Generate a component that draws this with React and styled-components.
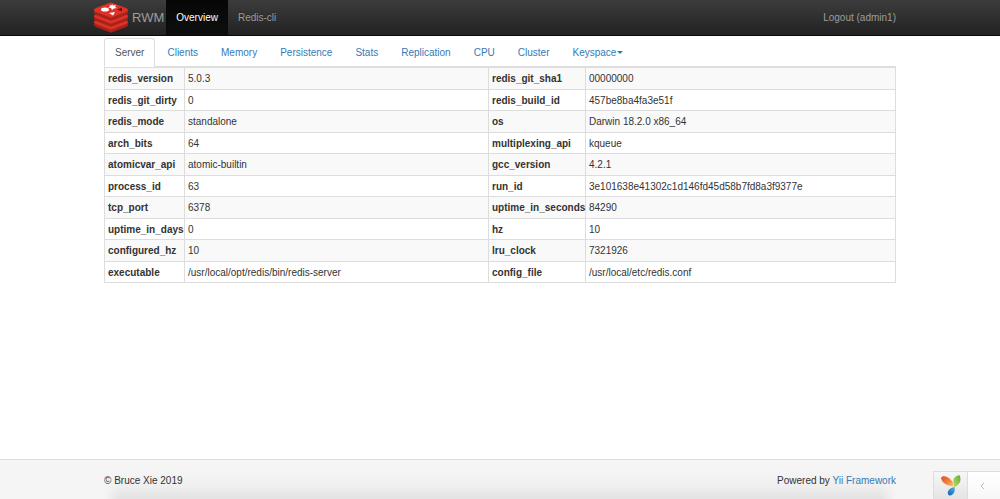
import React from 'react';
import styled, { createGlobalStyle, css } from 'styled-components';

const GlobalStyle = createGlobalStyle`
  *, *::before, *::after { box-sizing: border-box; }
  body {
    margin: 0;
    background: #fff;
    color: #333;
    font: 10px/14px "Helvetica Neue", Helvetica, "Liberation Sans", Arial, sans-serif;
  }
  a { color: #337ab7; text-decoration: none; }
`;

const Page = styled.div`
  display: flex;
  flex-direction: column;
  min-height: 100vh;
`;

const Container = styled.div`
  width: 100%;
  max-width: 792px;
  margin: 0 auto;
`;

const Navbar = styled.header`
  background: linear-gradient(to bottom, #3c3c3c 0%, #222 100%);
  border-bottom: 1px solid #080808;
`;

const NavRow = styled(Container)`
  display: flex;
  align-items: stretch;
  height: 35px;
`;

const Brand = styled.a`
  && { color: #9d9d9d; }
  display: flex;
  align-items: center;
  gap: 4px;
  margin-left: -10px;
  padding-right: 2px;
  font-size: 13px;
`;

const Logo = styled.svg`
  display: block;
  width: 34px;
  height: 31px;
`;

const NavLinks = styled.nav`
  display: flex;
  flex: 1;
`;

const NavLink = styled.a`
  && { color: ${(p) => (p.$active ? '#fff' : '#9d9d9d')}; }
  display: flex;
  align-items: center;
  padding: 0 10px;
  text-shadow: 0 -1px 0 rgba(0, 0, 0, 0.25);
  ${(p) => p.$active && css`
    background: linear-gradient(to bottom, #080808 0%, #0f0f0f 100%);
    box-shadow: inset 0 3px 9px rgba(0, 0, 0, 0.25);
  `}
`;

const LogoutButton = styled.button`
  padding: 0;
  border: 0;
  background: none;
  color: #9d9d9d;
  font: inherit;
  cursor: pointer;
`;

const Main = styled.main`
  flex: 1;
  padding-top: 2px;
`;

const Tabs = styled.nav`
  display: flex;
  gap: 1px;
  border-bottom: 1px solid #ddd;
`;

const Tab = styled.a`
  display: flex;
  align-items: center;
  height: 29px;
  margin-bottom: -1px;
  padding: 0 10px;
  border: 1px solid transparent;
  border-radius: 3px 3px 0 0;
  ${(p) => p.$active && css`
    && { color: #555; }
    background: #fff;
    border-color: #ddd #ddd #fff;
  `}
`;

const Caret = styled.span`
  margin-left: 1px;
  border-top: 3px solid;
  border-left: 3px solid transparent;
  border-right: 3px solid transparent;
`;

const InfoTable = styled.table`
  width: 100%;
  height: 216px;
  border: 1px solid #ddd;
  border-collapse: collapse;
  table-layout: fixed;
`;

const Col = styled.col`
  width: ${(p) => p.$width};
`;

const InfoRow = styled.tr`
  &:nth-child(odd) { background: #f9f9f9; }
`;

const Name = styled.th`
  padding: 4px 3px 2px;
  border: 1px solid #ddd;
  text-align: left;
  white-space: nowrap;
`;

const Value = styled.td`
  padding: 4px 3px 2px;
  border: 1px solid #ddd;
`;

const Footer = styled.footer`
  height: 40px;
  border-top: 1px solid #ddd;
  background: #f5f5f5;
`;

const FooterRow = styled(Container)`
  display: flex;
  align-items: center;
  justify-content: space-between;
  height: 39px;
  padding-top: 3px;
  background:
    linear-gradient(to right, #f5f5f5, rgba(245, 245, 245, 0) 16px, rgba(245, 245, 245, 0) calc(100% - 16px), #f5f5f5),
    linear-gradient(to bottom, #f5f5f5 30%, #eee 70%, #e2e2e2 100%);
`;

const DebugBar = styled.aside`
  position: fixed;
  right: 0;
  bottom: 0;
  display: flex;
  height: 28px;
  border: 1px solid #ddd;
  border-width: 1px 0 0 1px;
`;

const DebugLogo = styled.a`
  display: flex;
  align-items: center;
  justify-content: center;
  width: 33px;
  background: linear-gradient(to bottom, #f7f7f7, #e4e4e4);
`;

const DebugToggle = styled.button`
  display: flex;
  align-items: center;
  justify-content: center;
  width: 33px;
  padding: 0 3px 0 0;
  border: 0;
  border-left: 1px solid #ddd;
  background: linear-gradient(to bottom, #fff, #f7f7f7);
  color: #bbb;
  cursor: pointer;
`;

const layers = [12, 6, 0];

function RedisLogo() {
  return (
    <Logo viewBox="0 0 34 31" aria-hidden="true">
      {layers.map((y) => (
        <g key={y} transform={`translate(0 ${y})`}>
          <path d="M0 8v3c0 1 1 1 2 2l13 5q2 1 4 0l13-5c1-1 2-1 2-2V8z" fill="#a8221a" />
          <path d="M0 8c0-1 1-1 2-2L15 1q2-1 4 0l13 5c1 1 2 1 2 2s-1 1-2 2l-13 5q-2 1-4 0L2 10C1 9 0 9 0 8z" fill="#dc3228" />
        </g>
      ))}
      <path d="m18 2 1 1.500 3-.5-1 2 2 1-3 .5L18 8l-1-2-3-.5 2-1-.5-1.500 2 .5z" fill="#fff" />
      <ellipse cx="11" cy="7.500" rx="4" ry="2" fill="#fff" />
      <path d="m15 11 6-1-2 3.500z" fill="#fff" />
      <path d="m23 7.500 5-2v4z" fill="#7a0c00" />
    </Logo>
  );
}

function YiiLogo() {
  return (
    <svg width="20" height="21" viewBox="0 0 20 21" role="img" aria-label="Yii">
      <defs>
        <linearGradient id="leafOrange" x1="0" y1="0" x2="1" y2="1">
          <stop offset="0" stopColor="#e5452f" />
          <stop offset="0.6" stopColor="#f08a3c" />
          <stop offset="1" stopColor="#f7cf73" />
        </linearGradient>
        <linearGradient id="leafGreen" x1="1" y1="0" x2="0" y2="1">
          <stop offset="0" stopColor="#5fae35" />
          <stop offset="1" stopColor="#c3de60" />
        </linearGradient>
        <linearGradient id="leafBlue" x1="1" y1="0" x2="0" y2="1">
          <stop offset="0" stopColor="#4db3e6" />
          <stop offset="1" stopColor="#1560ae" />
        </linearGradient>
      </defs>
      <path d="M0 3C1 0 7 1 10 5c2 2 2.500 4 2.500 6.500C8 11 1 9 0 3z" fill="url(#leafOrange)" />
      <path d="M18.500 0C14 1 11.500 4 12.500 8c.5 2 .5 3 .5 4.500 6-3 8-7 5.500-12.500z" fill="url(#leafGreen)" />
      <path d="M13.500 12C9 13 6 15.500 7 19c1 2.500 4 1.500 5.500-.5 1.500-2 1.500-4 1-6.500z" fill="url(#leafBlue)" />
    </svg>
  );
}

const tabs = ['Server', 'Clients', 'Memory', 'Persistence', 'Stats', 'Replication', 'CPU', 'Cluster'];

const serverInfo = [
  ['redis_version', '5.0.3', 'redis_git_sha1', '00000000'],
  ['redis_git_dirty', '0', 'redis_build_id', '457be8ba4fa3e51f'],
  ['redis_mode', 'standalone', 'os', 'Darwin 18.2.0 x86_64'],
  ['arch_bits', '64', 'multiplexing_api', 'kqueue'],
  ['atomicvar_api', 'atomic-builtin', 'gcc_version', '4.2.1'],
  ['process_id', '63', 'run_id', '3e101638e41302c1d146fd45d58b7fd8a3f9377e'],
  ['tcp_port', '6378', 'uptime_in_seconds', '84290'],
  ['uptime_in_days', '0', 'hz', '10'],
  ['configured_hz', '10', 'lru_clock', '7321926'],
  ['executable', '/usr/local/opt/redis/bin/redis-server', 'config_file', '/usr/local/etc/redis.conf'],
];

export default function App() {
  return (
    <Page>
      <GlobalStyle />
      <Navbar>
        <NavRow>
          <Brand href="#home">
            <RedisLogo />
            RWM
          </Brand>
          <NavLinks>
            <NavLink href="#overview" $active>Overview</NavLink>
            <NavLink href="#cli">Redis-cli</NavLink>
          </NavLinks>
          <LogoutButton type="button">Logout (admin1)</LogoutButton>
        </NavRow>
      </Navbar>
      <Main>
        <Container>
          <Tabs>
            {tabs.map((name) => (
              <Tab key={name} href={`#${name.toLowerCase()}`} $active={name === 'Server'}>{name}</Tab>
            ))}
            <Tab href="#keyspace">Keyspace<Caret /></Tab>
          </Tabs>
          <InfoTable>
            <colgroup>
              <Col $width="80px" />
              <Col $width="304px" />
              <Col $width="97px" />
              <Col $width="auto" />
            </colgroup>
            <tbody>
              {serverInfo.map(([nameA, valueA, nameB, valueB]) => (
                <InfoRow key={nameA}>
                  <Name scope="row">{nameA}</Name>
                  <Value>{valueA}</Value>
                  <Name scope="row">{nameB}</Name>
                  <Value>{valueB}</Value>
                </InfoRow>
              ))}
            </tbody>
          </InfoTable>
        </Container>
      </Main>
      <Footer>
        <FooterRow>
          <span>© Bruce Xie 2019</span>
          <span>Powered by <a href="#yii">Yii Framework</a></span>
        </FooterRow>
      </Footer>
      <DebugBar>
        <DebugLogo href="#debug"><YiiLogo /></DebugLogo>
        <DebugToggle type="button" aria-label="Expand toolbar">
          <svg width="5" height="8" viewBox="0 0 5 8" fill="none" stroke="currentColor" aria-hidden="true">
            <path d="M4 1 1 4l3 3" />
          </svg>
        </DebugToggle>
      </DebugBar>
    </Page>
  );
}
